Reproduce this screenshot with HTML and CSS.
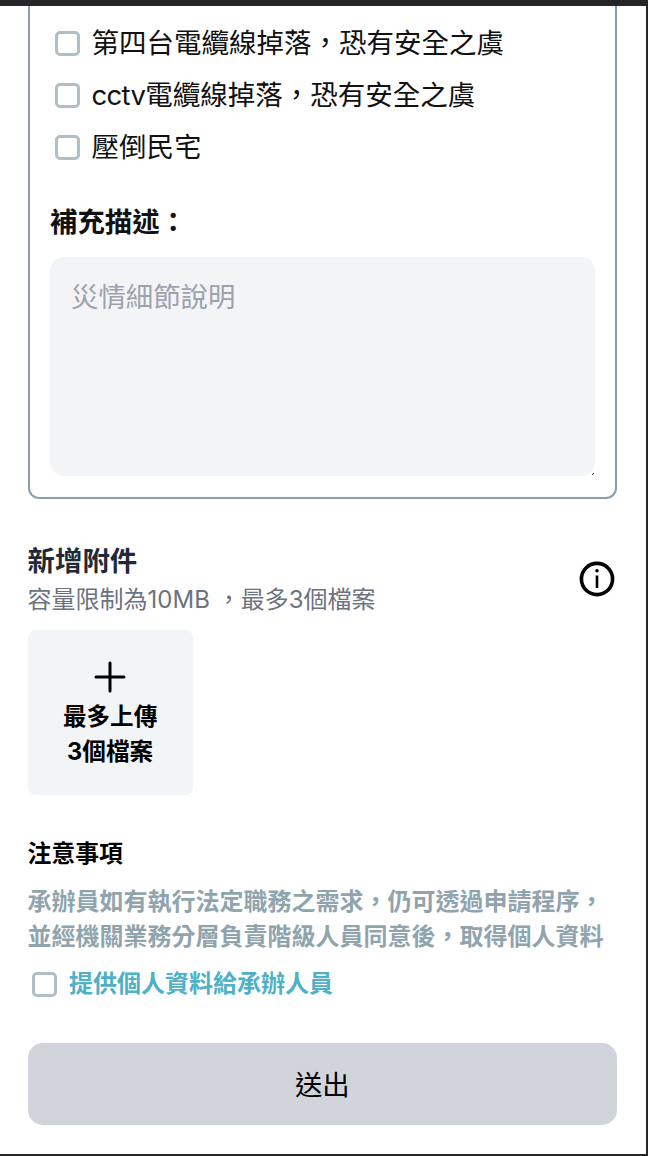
FILE: index.html
```html
<!DOCTYPE html>
<html lang="zh-Hant">
<head>
<meta charset="utf-8">
<title>新增附件</title>
<link rel="stylesheet" href="styles.css">
</head>
<body>
<main class="frame">
  <form class="form">
    <section class="card">
      <label class="check-row"><input type="checkbox" class="box"><span class="check-text">第四台電纜線掉落，恐有安全之虞</span></label>
      <label class="check-row"><input type="checkbox" class="box"><span class="check-text"><span class="latin">cctv</span>電纜線掉落，恐有安全之虞</span></label>
      <label class="check-row"><input type="checkbox" class="box"><span class="check-text">壓倒民宅</span></label>
      <h2 class="desc-title">補充描述：</h2>
      <textarea class="desc" placeholder="災情細節說明"></textarea>
    </section>

    <section class="attach">
      <div class="attach-head">
        <div>
          <h2 class="attach-title">新增附件</h2>
          <p class="attach-sub">容量限制為10MB ，最多3個檔案</p>
        </div>
        <svg class="info" viewBox="0 0 36 36" fill="none" stroke="#000" stroke-width="3.6" aria-hidden="true">
          <circle cx="18" cy="18" r="15.6"/>
          <path d="M18 14.5V27" stroke-width="2.6"/>
          <circle cx="18" cy="9.8" r="1.8" fill="#000" stroke="none"/>
        </svg>
      </div>
      <button type="button" class="upload">
        <svg class="plus" viewBox="0 0 32 32" fill="none" stroke="#000" stroke-width="3" stroke-linecap="round" aria-hidden="true">
          <path d="M16 2V30M2 16H30"/>
        </svg>
        <span class="upload-text">最多上傳<br>3個檔案</span>
      </button>
    </section>

    <section class="notice">
      <h3 class="notice-title">注意事項</h3>
      <p class="notice-body">承辦員如有執行法定職務之需求，仍可透過申請程序，<br>並經機關業務分層負責階級人員同意後，取得個人資料</p>
      <label class="consent"><input type="checkbox" class="box"><span>提供個人資料給承辦人員</span></label>
    </section>

    <button type="button" class="submit">送出</button>
  </form>
</main>
</body>
</html>
```

FILE: styles.css
```css
* { box-sizing: border-box; }

html, body {
  margin: 0;
  padding: 0;
  background: #fff;
}

body {
  font-family: Inter, "Noto Sans CJK TC", "Noto Sans CJK SC", sans-serif;
  color: #111;
}

.frame {
  width: 648px;
  height: 1156px;
  overflow: hidden;
  background: #fff;
  border-top: 6px solid #262626;
  border-right: 2px solid #262626;
  border-bottom: 2px solid #262626;
}

.form {
  padding: 0 29px 0 27.6px;
}

.card {
  height: 493px;
  padding: 11px 20px 0 20.4px;
  border: 2px solid #8aa0ae;
  border-top: 0;
  border-radius: 0 0 11px 11px;
}

.check-row {
  display: flex;
  align-items: center;
  gap: 12px;
  height: 52px;
  padding-left: 4.6px;
  font-size: 27.5px;
  line-height: 36px;
  color: #111;
}

.check-text {
  padding-top: 0;
}

.latin {
  letter-spacing: -0.7px;
}

.box {
  appearance: none;
  -webkit-appearance: none;
  flex: none;
  width: 25px;
  height: 25px;
  margin: 0;
  border: 3px solid #b0bec5;
  border-radius: 5px;
  background: #fff;
}

.desc-title {
  margin: 31px 0 17px;
  font-size: 27.4px;
  line-height: 36px;
  font-weight: 700;
  color: #111;
}

.desc {
  display: block;
  width: 545px;
  height: 219px;
  padding: 20px 21px;
  border: 0;
  border-radius: 14px;
  background: #f3f4f6;
  font: inherit;
  font-size: 27.4px;
  line-height: 41px;
  outline: none;
}

.desc::placeholder {
  color: #9ca3af;
  opacity: 1;
}

.desc::-webkit-resizer {
  background: linear-gradient(135deg, transparent 78%, #555 78%, #555 88%, transparent 88%) no-repeat right 1px bottom 1px / 6px 6px;
}

.attach {
  margin-top: 44px;
}

.attach-head {
  display: flex;
  justify-content: space-between;
  align-items: center;
  padding-right: 2px;
}

.attach-title {
  margin: 0;
  font-size: 27.4px;
  line-height: 36px;
  font-weight: 700;
  color: #1f2937;
}

.attach-sub {
  margin: 4px 0 0;
  font-size: 24px;
  line-height: 34px;
  color: #6b7280;
}

.info {
  width: 36px;
  height: 36px;
  margin-bottom: 3px;
}

.upload {
  display: flex;
  flex-direction: column;
  align-items: center;
  width: 165px;
  height: 165px;
  margin-top: 13px;
  padding: 31px 0 0;
  border: 0;
  border-radius: 8px;
  background: #f3f4f6;
  font: inherit;
  color: #000;
}

.plus {
  width: 32px;
  height: 32px;
}

.upload-text {
  margin-top: 6px;
  font-size: 23.6px;
  line-height: 35px;
  font-weight: 700;
}

.notice {
  margin-top: 41px;
}

.notice-title {
  margin: 0;
  font-size: 23.8px;
  line-height: 36px;
  font-weight: 700;
  color: #000;
}

.notice-body {
  margin: 12px 0 0;
  font-size: 24px;
  line-height: 35px;
  font-weight: 700;
  white-space: nowrap;
  color: #90a4ae;
}

.consent {
  display: flex;
  align-items: center;
  gap: 12px;
  margin-top: 12px;
  padding-left: 4.4px;
  font-size: 24px;
  line-height: 36px;
  font-weight: 700;
  color: #4fb0c6;
}

.submit {
  display: block;
  width: 100%;
  height: 82px;
  margin-top: 41px;
  padding: 0 0 3px;
  border: 0;
  border-radius: 15px;
  background: #d1d5db;
  font: inherit;
  font-size: 27.4px;
  color: #000;
}
```
